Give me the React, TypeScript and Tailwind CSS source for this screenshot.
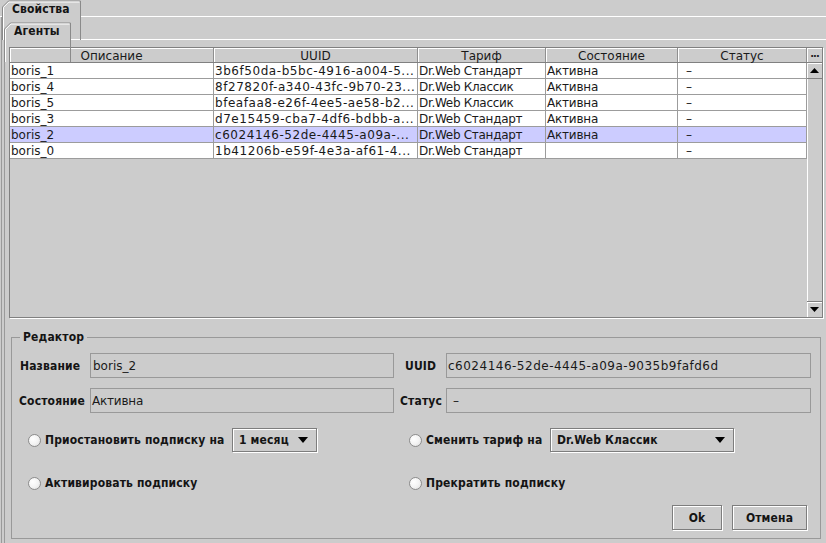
import React from "react";

const R = "font-['DejaVu_Sans',sans-serif] text-[12px] text-[#1a1a1a]";
const B = "font-['DejaVu_Sans_Condensed','DejaVu_Sans',sans-serif] font-bold [font-stretch:condensed] text-[12px] tracking-[0.15px] text-[#141414]";

function TabShape({ w, label, textPl }: { w: number; label: string; textPl: string }) {
  return (
    <div className="relative h-full shrink-0" style={{ width: w }}>
      <svg className="absolute inset-0" width={w} height="100%" overflow="visible">
        <path d={`M0.5 40 V7 L6.5 1 H${w - 0.5} V40`} stroke="#8a8a8a" fill="none" />
        <path d={`M1.5 40 V7.4 L6.9 2 H${w - 1.5}`} stroke="#ffffff" fill="none" />
      </svg>
      <span className={`relative block ${B} leading-[15px] pt-[2px] ${textPl}`}>{label}</span>
    </div>
  );
}

const rows = [
  { n: "boris_1", u: "3b6f50da-b5bc-4916-a004-5...", t: "Dr.Web Стандарт", s: "Активна" },
  { n: "boris_4", u: "8f27820f-a340-43fc-9b70-23...", t: "Dr.Web Классик", s: "Активна" },
  { n: "boris_5", u: "bfeafaa8-e26f-4ee5-ae58-b2...", t: "Dr.Web Классик", s: "Активна" },
  { n: "boris_3", u: "d7e15459-cba7-4df6-bdbb-a...", t: "Dr.Web Стандарт", s: "Активна" },
  { n: "boris_2", u: "c6024146-52de-4445-a09a-...", t: "Dr.Web Стандарт", s: "Активна", sel: true },
  { n: "boris_0", u: "1b41206b-e59f-4e3a-af61-4...", t: "Dr.Web Стандарт", s: "" },
];

function Arrow({ up }: { up?: boolean }) {
  return (
    <svg width="9" height="5" viewBox="0 0 9 5">
      {up ? <path d="M0 5 L4.5 0 L9 5 Z" fill="#000" /> : <path d="M0 0 L9 0 L4.5 5 Z" fill="#000" />}
    </svg>
  );
}

function Radio() {
  return (
    <div className="w-[13px] h-[13px] rounded-full border border-[#8c8c8c] bg-[radial-gradient(circle_at_35%_35%,#ffffff_0%,#f4f4f4_50%,#dcdcdc_100%)] shrink-0" />
  );
}

function Combo({ w, text }: { w: string; text: string }) {
  return (
    <div className={`${w} h-[24px] border border-[#7d7d7d] shadow-[inset_1px_1px_0_#ffffff,1px_1px_0_#ffffff] flex items-center justify-between pl-[6px] pr-[8px] shrink-0`}>
      <span className={`${B} leading-[14px]`}>{text}</span>
      <svg width="10" height="6" viewBox="0 0 10 6"><path d="M0 0 H10 L5 6 Z" fill="#000" /></svg>
    </div>
  );
}

function Btn({ w, text }: { w: string; text: string }) {
  return (
    <div className={`${w} h-[25px] border border-[#7d7d7d] shadow-[inset_1px_1px_0_#ffffff,1px_1px_0_#ffffff] flex items-center justify-center`}>
      <span className={`${B} leading-[14px]`}>{text}</span>
    </div>
  );
}

export default function App() {
  return (
    <div className="w-[826px] h-[543px] bg-[#cccccc] overflow-hidden flex flex-col">
      {/* outer tabs */}
      <div className="flex h-[17px] shrink-0">
        <div className="w-[2px] border-b border-white" />
        <TabShape w={79} label="Свойства" textPl="pl-[10px]" />
        <div className="flex-1 border-b border-white" />
      </div>
      <div className="flex-1 flex flex-col ml-[1px] border-l border-[#9a9a9a] pl-[2px] min-h-0">
        {/* inner tabs */}
        <div className="flex h-[18px] mt-[5px] shrink-0">
          <TabShape w={67} label="Агенты" textPl="pl-[10px]" />
          <div className="flex-1 border-b border-white" />
        </div>
        <div className="flex-1 flex flex-col border-l border-[#9a9a9a] pl-[4px] pt-[7px] min-h-0">
          {/* scroll pane */}
          <div className="w-[814px] h-[271px] border border-[#808080] shadow-[1px_1px_0_#ffffff] flex shrink-0">
            <div className="w-[797px] flex flex-col">
              <div className="flex h-[15px] border-b border-[#808080]">
                {[
                  ["Описание", "w-[204px]"],
                  ["UUID", "w-[204px]"],
                  ["Тариф", "w-[128px]"],
                  ["Состояние", "w-[132px]"],
                  ["Статус", "w-[129px]"],
                ].map(([t, w]) => (
                  <div key={t} className={`${w} h-full border-r border-[#8f8f8f] shadow-[inset_1px_1px_0_#ffffff] flex items-center justify-center ${R} leading-[14px] pt-[1px]`}>
                    {t}
                  </div>
                ))}
              </div>
              {rows.map((r) => (
                <div key={r.n} className={`flex h-[16px] border-b border-[#9c9c9c] ${r.sel ? "bg-[#ccccff]" : "bg-white"} ${R} leading-[16px]`}>
                  <div className="w-[204px] border-r border-[#9c9c9c] pl-[1px] whitespace-nowrap overflow-hidden">{r.n}</div>
                  <div className="w-[204px] border-r border-[#9c9c9c] pl-[1px] whitespace-nowrap overflow-hidden tracking-[0.55px]">{r.u}</div>
                  <div className="w-[128px] border-r border-[#9c9c9c] pl-[1px] whitespace-nowrap overflow-hidden tracking-[-0.3px]">{r.t}</div>
                  <div className="w-[132px] border-r border-[#9c9c9c] pl-[1px] whitespace-nowrap overflow-hidden tracking-[-0.2px]">{r.s}</div>
                  <div className="w-[129px] border-r border-[#9c9c9c] pl-[8px] whitespace-nowrap overflow-hidden">–</div>
                </div>
              ))}
            </div>
            {/* scrollbar */}
            <div className="w-[15px] flex flex-col">
              <div className="h-[15px] border-b border-[#808080] shadow-[inset_1px_1px_0_#ffffff] flex items-center justify-center">
                <span className="font-['DejaVu_Sans',sans-serif] font-bold text-[10px] leading-[8px] text-[#222] tracking-[-1px] pb-[3px]">...</span>
              </div>
              <div className="h-[16px] border-b border-[#808080] shadow-[inset_1px_1px_0_#ffffff] flex items-center justify-center">
                <Arrow up />
              </div>
              <div className="flex-1 shadow-[inset_1px_0_0_#ffffff]" />
              <div className="h-[16px] border-t border-[#808080] shadow-[inset_1px_1px_0_#ffffff] flex items-center justify-center">
                <Arrow />
              </div>
            </div>
          </div>

          {/* editor */}
          <fieldset className="mt-[12px] ml-[2px] w-[810px] h-[209px] border border-[#999999] shrink-0">
            <legend className={`${B} leading-[14px] ml-[8px] px-[3px] tracking-[-0.2px]`}>Редактор</legend>
            <div className="flex h-[25px] mt-[9px] items-center">
              <div className={`w-[78px] pl-[8px] ${B}`}>Название</div>
              <div className={`w-[304px] h-full border border-[#999999] flex items-center pl-[2px] ${R}`}>boris_2</div>
              <div className={`w-[52px] pl-[11px] ${B}`}>UUID</div>
              <div className={`w-[365px] h-full border border-[#999999] flex items-center pl-[1px] tracking-[0.5px] ${R}`}>c6024146-52de-4445-a09a-9035b9fafd6d</div>
            </div>
            <div className="flex h-[25px] mt-[10px] items-center">
              <div className={`w-[78px] pl-[7px] ${B}`}>Состояние</div>
              <div className={`w-[304px] h-full border border-[#999999] flex items-center pl-[1px] tracking-[-0.2px] ${R}`}>Активна</div>
              <div className={`w-[52px] pl-[6px] ${B}`}>Статус</div>
              <div className={`w-[365px] h-full border border-[#999999] flex items-center pl-[6px] ${R}`}>–</div>
            </div>
            <div className="flex h-[24px] mt-[15px] items-center">
              <div className="w-[397px] pl-[16px] flex items-center">
                <Radio />
                <span className={`w-[191px] pl-[4px] ${B}`}>Приостановить подписку на</span>
                <Combo w="w-[85px]" text="1 месяц" />
              </div>
              <div className="flex items-center">
                <Radio />
                <span className={`w-[128px] pl-[4px] ${B}`}>Сменить тариф на</span>
                <Combo w="w-[184px]" text="Dr.Web Классик" />
              </div>
            </div>
            <div className="flex h-[24px] mt-[19px] items-center">
              <div className="w-[397px] pl-[16px] flex items-center">
                <Radio />
                <span className={`pl-[4px] ${B}`}>Активировать подписку</span>
              </div>
              <div className="flex items-center">
                <Radio />
                <span className={`pl-[4px] ${B}`}>Прекратить подписку</span>
              </div>
            </div>
            <div className="flex h-[25px] mt-[10px] justify-end pr-[13px] gap-[10px]">
              <Btn w="w-[50px]" text="Ok" />
              <Btn w="w-[75px]" text="Отмена" />
            </div>
          </fieldset>
        </div>
      </div>
    </div>
  );
}
